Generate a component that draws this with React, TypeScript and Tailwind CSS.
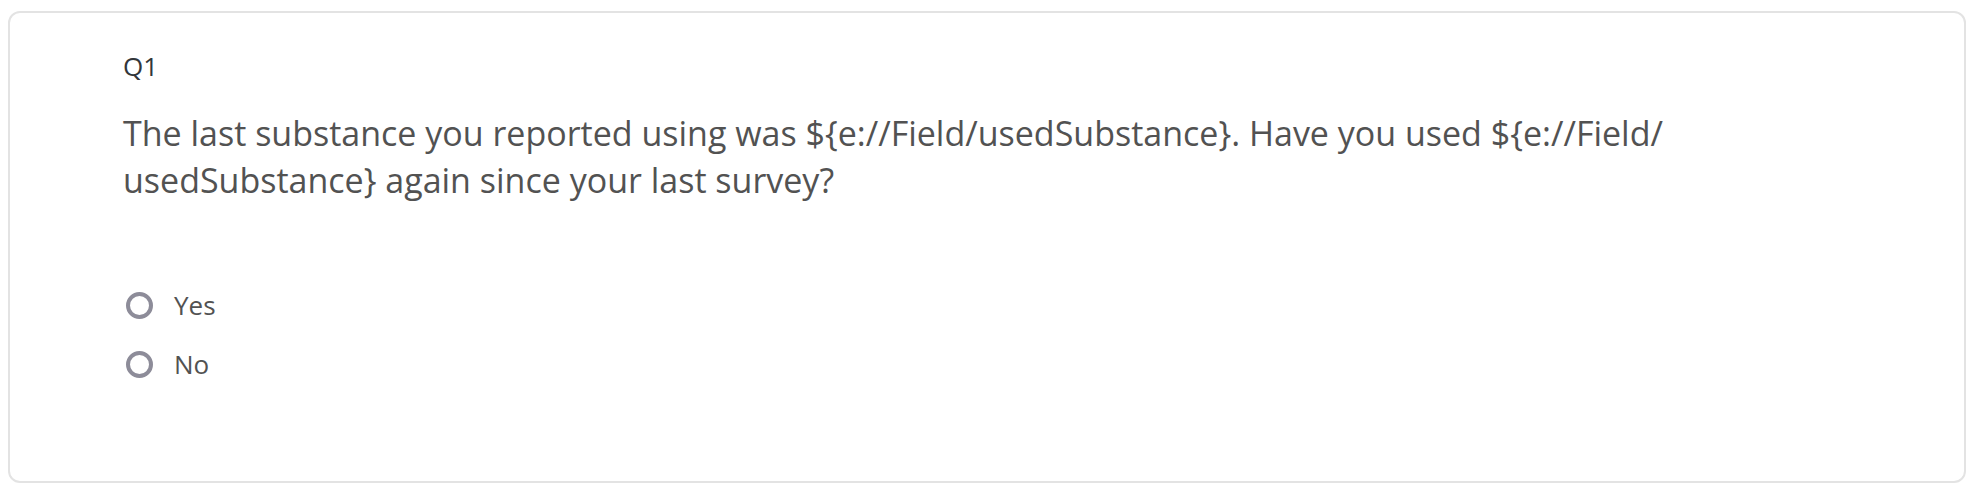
const choices = ["Yes", "No"]

function Radio() {
  return <span className="block w-[27px] h-[27px] rounded-full border-[4px] border-[#8d8c99] bg-white flex-shrink-0" />
}

export default function App() {
  return (
    <div className="min-h-[498px] bg-white pt-[11px] pl-[8px]" style={{ fontFamily: "'Open Sans', sans-serif" }}>
      <div className="w-[1958px] h-[472px] rounded-[12px] border-2 border-[#e3e3e3] bg-white pt-[35px] pl-[113px]">
        {/* Question label */}
        <div className="text-[26px] leading-[36px] text-[#32363a]">Q1</div>

        {/* Question text — piped field breaks after the slash like the original */}
        <div className="mt-[26px] max-w-[1720px] text-[34px] leading-[47px] text-[#525252]">
          The last substance you reported using was ${"{"}e://Field/usedSubstance{"}"}. Have you used ${"{"}e://Field/<wbr />usedSubstance{"}"} again since your last survey?
        </div>

        {/* Choices */}
        <div className="mt-[81px] flex flex-col gap-[19px]">
          {choices.map((c) => (
            <label key={c} className="flex items-center h-[40px] ml-[3px] gap-[21px] cursor-pointer">
              <Radio />
              <span className="text-[26px] leading-[40px] text-[#525252]">{c}</span>
            </label>
          ))}
        </div>
      </div>
    </div>
  )
}
